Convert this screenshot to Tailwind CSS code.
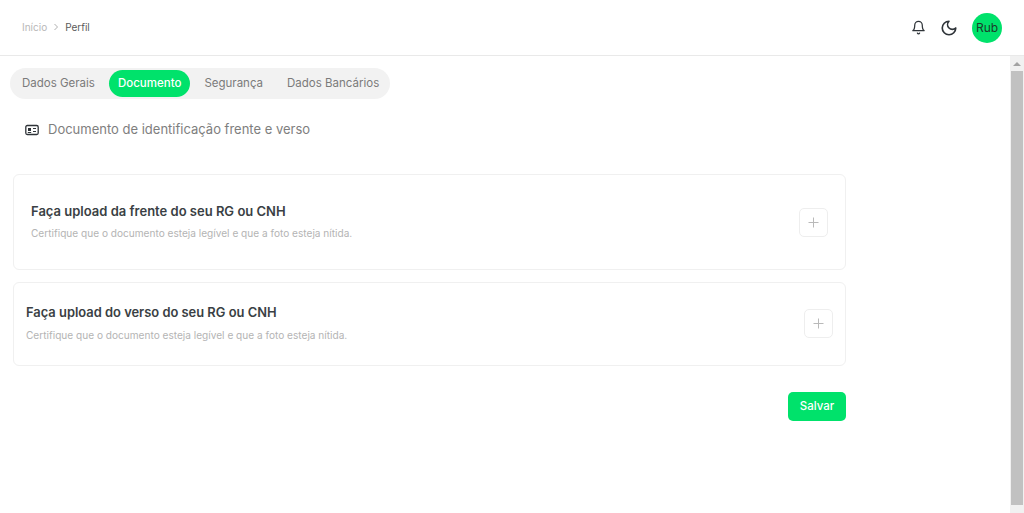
<!DOCTYPE html>
<html lang="pt-BR">
<head>
    <meta charset="UTF-8">
    <meta name="viewport" content="width=device-width, initial-scale=1.0">
    <title>Perfil</title>
    <script src="https://cdn.jsdelivr.net/npm/@tailwindcss/browser@4"></script>
</head>
<body class="bg-white font-['Inter',sans-serif] overflow-hidden">
    <div class="flex flex-col h-[513px] w-[1024px]">
        <!-- Header -->
        <header class="h-[56px] shrink-0 border-b border-[#e9e9e9] flex items-center justify-between pl-[22px] pr-[22px]">
            <nav class="flex items-center text-[10px] leading-none -mt-[2px]">
                <span class="text-[#b8b8b8]">Início</span>
                <svg class="w-[8px] h-[8px] mx-[5px] text-[#9a9a9a]" viewBox="0 0 8 8" fill="none" stroke="currentColor" stroke-width="0.8"><path d="M2.5 1 L5.5 4 L2.5 7"/></svg>
                <span class="text-[#5a5a5a]">Perfil</span>
            </nav>
            <div class="flex items-center">
                <svg class="w-[15px] h-[15px] text-[#2f3439] mr-[14px]" viewBox="0 0 24 24" fill="none" stroke="currentColor" stroke-width="2" stroke-linecap="round" stroke-linejoin="round"><path d="M6 8a6 6 0 0 1 12 0c0 7 3 9 3 9H3s3-2 3-9"/><path d="M10.3 21a1.94 1.94 0 0 0 3.4 0"/></svg>
                <svg class="w-[18px] h-[18px] text-[#2f3439] mr-[14px]" viewBox="0 0 24 24" fill="none" stroke="currentColor" stroke-width="2.2" stroke-linecap="round" stroke-linejoin="round"><path d="M12 3a6 6 0 0 0 9 9 9 9 0 1 1-9-9Z"/></svg>
                <div class="w-[30px] h-[30px] rounded-full bg-[#00e26b] flex items-center justify-center text-[12px] text-[#1c3a2a]">Rub</div>
            </div>
        </header>

        <div class="flex flex-1 min-h-0">
            <!-- Conteudo -->
            <main class="flex-1 pl-[10px]">
                <div class="mt-[12px] inline-flex items-center h-[31px] rounded-full bg-[#f2f2f2] pl-[12px] pr-[11px] text-[11.5px] text-[#7b7b7b]">
                    <span>Dados Gerais</span>
                    <span class="ml-[14px] h-[27px] px-[9px] rounded-full bg-[#00e26b] text-white font-medium flex items-center">Documento</span>
                    <span class="ml-[14px]">Segurança</span>
                    <span class="ml-[24px]">Dados Bancários</span>
                </div>

                <div class="mt-[22px] ml-[15px] flex items-center h-[18px] text-[13px] text-[#7e7e7e]">
                    <svg class="w-[14px] h-[14px] text-[#2f3439] mr-[9px]" viewBox="0 0 14 14" fill="none" stroke="currentColor"><rect x="0.8" y="2.5" width="12.4" height="9" rx="1.5" stroke-width="1.3"/><rect x="3" y="5" width="3" height="3" fill="currentColor" stroke="none"/><path d="M2.8 9.5h3.4M8 5.5h3M8 8.5h3" stroke-width="1"/></svg>
                    <span>Documento de identificação frente e verso</span>
                </div>

                <div class="mt-[35px] ml-[3px] w-[833px]">
                    <!-- Frente -->
                    <div class="h-[96px] rounded-[6px] border border-[#f0f0f0] flex items-center justify-between pl-[17px] pr-[17px]">
                        <div class="-mt-[2px]">
                            <h3 class="text-[13px] leading-[18px] font-semibold text-[#3a3f44]">Faça upload da frente do seu RG ou CNH</h3>
                            <p class="mt-[6px] text-[10.1px] leading-[14px] text-[#b4b4b4]">Certifique que o documento esteja legível e que a foto esteja nítida.</p>
                        </div>
                        <button class="w-[29px] h-[29px] rounded-[5px] border border-[#eeeeee] flex items-center justify-center">
                            <svg class="w-[11px] h-[11px] text-[#b9b9b9]" viewBox="0 0 11 11" fill="none" stroke="currentColor" stroke-width="1"><path d="M5.5 0.5v10M0.5 5.5h10"/></svg>
                        </button>
                    </div>
                    <!-- Verso -->
                    <div class="mt-[12px] h-[84px] rounded-[6px] border border-[#f0f0f0] flex items-center justify-between pl-[12px] pr-[12px]">
                        <div class="-mt-[2px]">
                            <h3 class="text-[12.9px] leading-[18px] font-semibold text-[#3a3f44]">Faça upload do verso do seu RG ou CNH</h3>
                            <p class="mt-[6px] text-[10.1px] leading-[14px] text-[#b4b4b4]">Certifique que o documento esteja legível e que a foto esteja nítida.</p>
                        </div>
                        <button class="-mt-[2px] w-[29px] h-[29px] rounded-[5px] border border-[#eeeeee] flex items-center justify-center">
                            <svg class="w-[11px] h-[11px] text-[#b9b9b9]" viewBox="0 0 11 11" fill="none" stroke="currentColor" stroke-width="1"><path d="M5.5 0.5v10M0.5 5.5h10"/></svg>
                        </button>
                    </div>
                    <div class="mt-[26px] flex justify-end">
                        <button class="w-[58px] h-[29px] rounded-[5px] bg-[#00e26b] text-white text-[11.5px] font-medium">Salvar</button>
                    </div>
                </div>
            </main>

            <!-- Barra de rolagem -->
            <div class="w-[14px] shrink-0 bg-[#f1f1f1] flex flex-col items-center">
                <div class="h-[15px] flex items-center justify-center">
                    <div class="w-0 h-0 border-l-[4px] border-r-[4px] border-b-[4px] border-l-transparent border-r-transparent border-b-[#a3a3a3]"></div>
                </div>
                <div class="w-[12px] h-[434px] bg-[#c1c1c1]"></div>
            </div>
        </div>
    </div>
</body>
</html>
